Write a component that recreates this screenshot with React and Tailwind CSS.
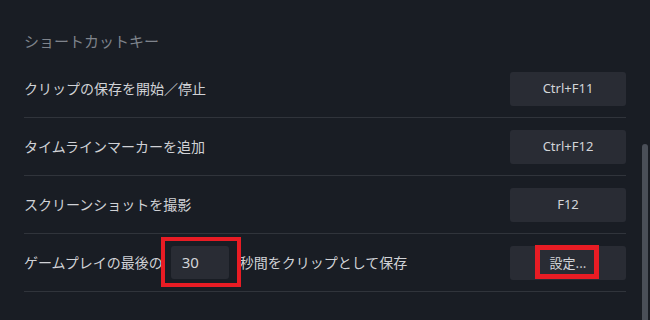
import React from "react";

const jp = { fontFamily: '"Noto Sans CJK JP", "Noto Sans", sans-serif' };
const lat = { fontFamily: '"Noto Sans", "Noto Sans CJK JP", sans-serif' };

function KeyButton({ children }) {
  return (
    <div
      className="w-[116px] h-[34px] rounded-[3px] bg-[#292c34] flex items-center justify-center text-[13px] text-[#d3d5d9]"
      style={lat}
    >
      {children}
    </div>
  );
}

function Row({ label, children }) {
  return (
    <div className="h-[58px] border-b border-[#30343b] flex items-center justify-between">
      <div className="text-[14px] text-[#d0d2d6] flex items-center" style={jp}>
        {label}
      </div>
      {children}
    </div>
  );
}

export default function App() {
  return (
    <div className="relative w-[650px] h-[320px] overflow-hidden bg-[#191d24]">
      <div className="pl-6 pr-6">
        <div
          className="pt-[31px] h-[60px] text-[15px] leading-[20px] text-[#7f848c]"
          style={jp}
        >
          ショートカットキー
        </div>
        <Row label="クリップの保存を開始／停止">
          <KeyButton>Ctrl+F11</KeyButton>
        </Row>
        <Row label="タイムラインマーカーを追加">
          <KeyButton>Ctrl+F12</KeyButton>
        </Row>
        <Row label="スクリーンショットを撮影">
          <KeyButton>F12</KeyButton>
        </Row>
        <Row
          label={
            <>
              <span>ゲームプレイの最後の</span>
              <span
                className="ml-[8px] mr-[11px] w-[58px] h-[33px] rounded-[3px] bg-[#292c34] flex items-center pl-[11px] text-[15px] text-[#d3d5d9]"
                style={lat}
              >
                30
              </span>
              <span>秒間をクリップとして保存</span>
            </>
          }
        >
          <div style={jp} className="w-[116px] h-[34px] rounded-[3px] bg-[#292c34] flex items-center justify-center text-[13px] text-[#d3d5d9]">
            設定...
          </div>
        </Row>
      </div>

      {/* scrollbar */}
      <div className="absolute left-[642px] top-[144px] w-[6px] h-[200px] rounded-full bg-[#4a4f58]" />

      {/* red annotations */}
      <div className="absolute left-[161px] top-[237px] w-[80px] h-[50px] border-4 border-[#e81c24]" />
      <div className="absolute left-[535px] top-[245px] w-[64px] h-[34px] border-[5px] border-[#e81c24]" />
    </div>
  );
}
